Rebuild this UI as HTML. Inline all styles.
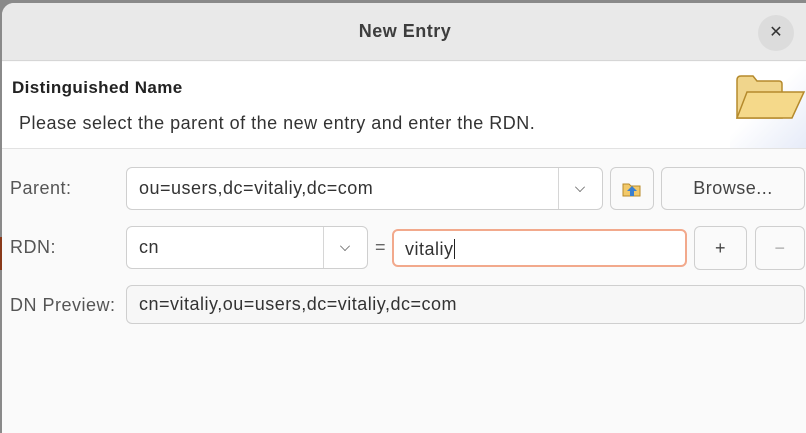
<!DOCTYPE html>
<html><head><style>
*{margin:0;padding:0;box-sizing:border-box}
body{width:806px;height:425px;background:#8a8a8a;font-family:"Liberation Sans","DejaVu Sans",sans-serif;position:relative;overflow:hidden;color:#333;letter-spacing:0.5px}
.win{position:absolute;left:2px;top:3px;width:806px;height:430px;background:#fafafa;border-radius:12px 0 0 0;overflow:hidden}
.tb{position:absolute;left:0;top:0;right:0;height:58px;background:#e9e9e9;border-bottom:1px solid #d6d6d6}
.title{position:absolute;left:0;right:0;top:18px;text-align:center;font-weight:bold;font-size:18px;color:#3d3d3d}
.close{position:absolute;left:756px;top:12px;width:36px;height:36px;border-radius:50%;background:#dcdcdc;text-align:center;line-height:36px;font-size:16px;color:#333;letter-spacing:0}
.hdr{position:absolute;left:0;top:59px;right:0;height:87px;background:#fff;border-bottom:1px solid #e2e2e2}
.h1{position:absolute;left:10px;top:16px;font-weight:bold;font-size:17px;color:#222;letter-spacing:0.4px}
.h2{position:absolute;left:17px;top:51px;font-size:18px;color:#333}
.lbl{position:absolute;left:8px;font-size:18px;color:#555}
.box{position:absolute;background:#fff;border:1px solid #cfcfcf;border-radius:6px;font-size:18px;color:#333;padding-left:12px}
.btn{position:absolute;background:#fafafa;border:1px solid #cfcfcf;border-radius:6px;text-align:center;font-size:18px;color:#444}
.div{position:absolute;top:0;bottom:0;width:1px;background:#d6d6d6}
.chev{position:absolute;top:14px;width:10px;height:10px;border-right:1.5px solid #555;border-bottom:1.5px solid #555;transform:rotate(45deg) scale(.7)}
</style></head><body>
<div class="win">
 <div class="tb"><div class="title">New Entry</div><div class="close">✕</div></div>
 <div class="hdr"><div class="h1">Distinguished Name</div><div class="h2">Please select the parent of the new entry and enter the RDN.</div>
  <div style="position:absolute;left:728px;top:0;width:76px;height:86px;background:linear-gradient(135deg,#fff 45%,#e6ebf8)"></div>
  <svg style="position:absolute;left:732px;top:10px" width="72" height="50" viewBox="0 0 72 50">
   <path d="M3 8 q0-4 4-4 h12 l4 5 h22 q3 0 3 3 v34 H3z" fill="#f0d58c" stroke="#b58a2c" stroke-width="1.5"/>
   <path d="M3 46 L13 20 H70 L58 46z" fill="#f5d98a" stroke="#b58a2c" stroke-width="1.5"/>
  </svg>
 </div>
 <div class="lbl" style="top:175px">Parent:</div>
 <div class="box" style="left:124px;top:164px;width:477px;height:43px;line-height:41px">ou=users,dc=vitaliy,dc=com<div class="div" style="left:431px"></div><div class="chev" style="left:448px"></div></div>
 <div class="btn" style="left:608px;top:164px;width:44px;height:43px">
  <svg width="22" height="22" viewBox="0 0 22 22" style="margin-top:10px"><path d="M2 6h6l2 2h9v10H2z" fill="#f2c96a" stroke="#b88a2a"/><path d="M11 8l-5 5h3v5h4v-5h3z" fill="#3a7fd0"/></svg>
 </div>
 <div class="btn" style="left:659px;top:164px;width:144px;height:43px;line-height:41px">Browse...</div>
 <div class="lbl" style="top:234px">RDN:</div>
 <div class="box" style="left:124px;top:223px;width:242px;height:43px;line-height:41px">cn<div class="div" style="left:196px"></div><div class="chev" style="left:213px"></div></div>
 <div style="position:absolute;left:373px;top:234px;font-size:18px;color:#666">=</div>
 <div class="box" style="left:390px;top:226px;width:295px;height:38px;line-height:36px;border:2px solid #f2a98c;padding-left:11px">vitaliy<span style="display:inline-block;width:1px;height:20px;background:#222;vertical-align:-4px"></span></div>
 <div class="btn" style="left:692px;top:223px;width:53px;height:44px;line-height:42px">+</div>
 <div class="btn" style="left:753px;top:223px;width:50px;height:44px;line-height:42px;color:#aaa">−</div>
 <div class="lbl" style="top:292px">DN Preview:</div>
 <div class="box" style="left:124px;top:282px;width:679px;height:39px;line-height:37px;background:#f7f7f7">cn=vitaliy,ou=users,dc=vitaliy,dc=com</div>
</div>
<div style="position:absolute;left:0;top:237px;width:2px;height:33px;background:#8a3a1a"></div>
</body></html>
